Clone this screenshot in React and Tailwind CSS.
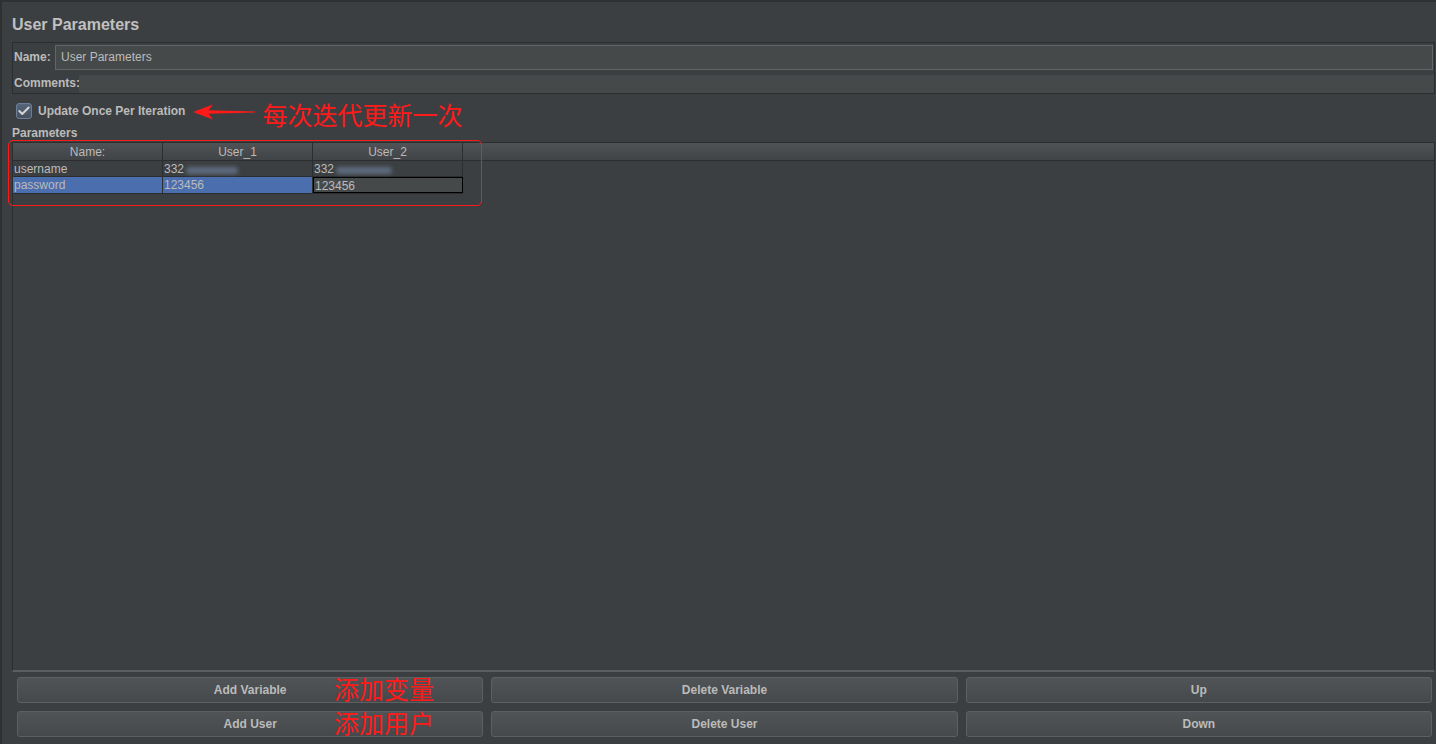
import { Check } from 'lucide-react'

const font = "font-['Liberation_Sans','Noto_Sans_CJK_SC',sans-serif]"

const Button = ({ label, note }) => (
  <div className="relative flex-1 h-[26px] flex items-center justify-center rounded-[3px] border border-[#5c6062] bg-gradient-to-b from-[#505456] to-[#46494b] text-[12px] font-bold text-[#bbbbbb]">
    {label}
    {note && (
      <span className="absolute left-[316px] top-[-3px] text-[25px] leading-[30px] text-[#ff1a1a] font-normal">
        {note}
      </span>
    )}
  </div>
)

const Blur = ({ w }) => (
  <span className={`inline-block ${w} h-[7px] ml-[2px] mt-[3px] rounded-full bg-[#6a7b96] opacity-75 blur-[2px] align-middle`} />
)

export default function App() {
  return (
    <div className={`relative w-[1436px] h-[744px] flex flex-col bg-[#3c3f41] border-t-2 border-l-2 border-[#2e3032] text-[#bbbbbb] ${font}`}>
      {/* title */}
      <div className="h-[40px] pl-[10px] pt-[6px] flex items-center text-[16px] font-bold text-[#c0c0c0]">
        User Parameters
      </div>

      {/* name / comments */}
      <div className="ml-[10px] mr-[1px] h-[52px] border border-[#2b2d2e] flex flex-col">
        <div className="h-[28px] flex items-center">
          <span className="w-[42px] pl-[1px] text-[12px] font-bold">Name:</span>
          <div className="flex-1 h-[25px] mr-[1px] flex items-center px-[5px] bg-[#45494a] border border-[#616566] text-[12px]">
            User Parameters
          </div>
        </div>
        <div className="flex-1 flex items-center">
          <span className="w-[66px] pl-[1px] pt-[2px] text-[12px] font-bold">Comments:</span>
          <div className="flex-1 h-[18px] mt-[3px] bg-[#45494a]" />
        </div>
      </div>

      {/* checkbox row */}
      <div className="h-[32px] pl-[14px] pt-[1px] flex items-center">
        <div className="w-[16px] h-[16px] flex items-center justify-center rounded-[3px] border border-[#6b7e9a] bg-gradient-to-b from-[#56657a] to-[#46505e]">
          <Check size={14} strokeWidth={3.5} className="text-[#d4d4d4]" />
        </div>
        <span className="ml-[6px] text-[12px] font-bold">Update Once Per Iteration</span>
        <svg width="64" height="18" viewBox="0 0 64 18" className="ml-[8px] mt-[2px]">
          <polygon points="0,9 20,1.5 15.5,7.3 62,8.4 62,9.6 15.5,10.7 20,16.5" fill="#ff1a1a" />
        </svg>
        <span className="ml-[5px] mt-[10px] text-[25px] leading-[30px] text-[#ff1a1a]">每次迭代更新一次</span>
      </div>

      <div className="h-[16px] pl-[10px] flex items-start text-[12px] font-bold leading-[14px]">Parameters</div>

      {/* table */}
      <div className="flex-1 ml-[10px] mr-[1px] border-l border-t border-r border-[#2b2d2e] border-b-2 border-b-[#5a5e60] flex flex-col">
        <div className="h-[18px] flex bg-gradient-to-b from-[#4f5355] to-[#414446] border-b border-[#2b2d2e] text-[12px]">
          {['Name:', 'User_1', 'User_2'].map((h) => (
            <div key={h} className="w-[150px] border-r border-[#2b2d2e] flex items-center justify-center">
              {h}
            </div>
          ))}
          <div className="flex-1" />
        </div>
        <div className="w-[450px] h-[16px] flex border-b border-[#2b2d2e] text-[12px]">
          <div className="w-[150px] pl-[1px] border-r border-[#2b2d2e] flex items-center">username</div>
          <div className="w-[150px] pl-[1px] border-r border-[#2b2d2e] flex items-center">
            332<Blur w="w-[52px]" />
          </div>
          <div className="w-[150px] pl-[1px] border-r border-[#2b2d2e] flex items-center">
            332<Blur w="w-[56px]" />
          </div>
        </div>
        <div className="w-[450px] h-[17px] flex border-b border-[#2b2d2e] text-[12px]">
          <div className="w-[150px] pl-[1px] border-r border-[#2b2d2e] bg-[#4b6eaf] flex items-center">password</div>
          <div className="w-[150px] pl-[1px] border-r border-[#2b2d2e] bg-[#4b6eaf] flex items-center">123456</div>
          <div className="w-[150px] pl-[1px] bg-[#45494a] border border-black flex items-center pt-[1px]">123456</div>
        </div>
      </div>

      {/* buttons */}
      <div className="h-[72px] pl-[15px] pr-[4px] pt-[5px] flex flex-col gap-[8px]">
        <div className="flex gap-[8px]">
          <Button label="Add Variable" note="添加变量" />
          <Button label="Delete Variable" />
          <Button label="Up" />
        </div>
        <div className="flex gap-[8px]">
          <Button label="Add User" note="添加用户" />
          <Button label="Delete User" />
          <Button label="Down" />
        </div>
      </div>

      {/* red annotation box around the table */}
      <div className="absolute left-[6px] top-[138px] w-[474px] h-[66px] border border-[#ff1a1a] rounded-[5px] pointer-events-none" />
    </div>
  )
}
